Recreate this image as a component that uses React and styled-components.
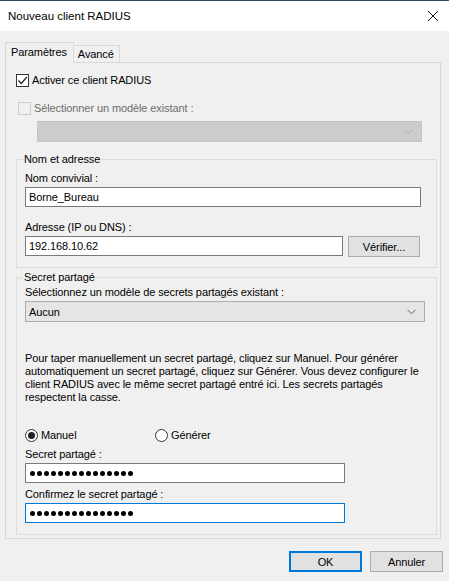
import styled, { createGlobalStyle } from "styled-components";

const GlobalStyle = createGlobalStyle`
  html, body {
    margin: 0;
    padding: 0;
    background: #f0f0f0;
  }
  body {
    font-family: "Liberation Sans", Arial, sans-serif;
    font-size: 11px;
    letter-spacing: -0.1px;
    color: #000;
  }
`;

function CheckMark() {
  return (
    <svg width="11" height="11" viewBox="0 0 11 11">
      <path d="M1.5 5.5 L4.3 8.5 L9.8 2" fill="none" stroke="#222" strokeWidth="1.2" />
    </svg>
  );
}

function Chevron({ color }) {
  return (
    <svg width="9" height="6" viewBox="0 0 9 6">
      <path d="M0.5 0.8 L4.5 4.8 L8.5 0.8" fill="none" stroke={color} strokeWidth="1" />
    </svg>
  );
}

function Masked({ count }) {
  return (
    <DotRow>
      {Array.from({ length: count }, (_, i) => (
        <Dot key={i} />
      ))}
    </DotRow>
  );
}

function App() {
  return (
    <Window>
      <GlobalStyle />
      <TitleBar>
        <Title>Nouveau client RADIUS</Title>
        <Close>
          <svg width="12" height="12" viewBox="0 0 12 12">
            <path d="M1 1 L11 11 M11 1 L1 11" stroke="#111" strokeWidth="1" />
          </svg>
        </Close>
      </TitleBar>

      <Content>
        <TabStrip>
          <Tab $active>Paramètres</Tab>
          <Tab>Avancé</Tab>
        </TabStrip>

        <Panel>
          <CheckRow>
            <CheckBox>
              <CheckMark />
            </CheckBox>
            Activer ce client RADIUS
          </CheckRow>
          <CheckRow $disabled>
            <CheckBox $disabled />
            Sélectionner un modèle existant :
          </CheckRow>
          <Combo $disabled $indent>
            <span />
            <Chevron color="#b0b0b0" />
          </Combo>

          <Group>
            <Legend>Nom et adresse</Legend>
            <Label>Nom convivial :</Label>
            <TextBox>Borne_Bureau</TextBox>
            <Label $gap>Adresse (IP ou DNS) :</Label>
            <InputRow>
              <TextBox $width={318}>192.168.10.62</TextBox>
              <Button $width={72}>Vérifier...</Button>
            </InputRow>
          </Group>

          <Group $second>
            <Legend>Secret partagé</Legend>
            <Label $first>Sélectionnez un modèle de secrets partagés existant :</Label>
            <Combo>
              <span>Aucun</span>
              <Chevron color="#666" />
            </Combo>
            <Help>
              Pour taper manuellement un secret partagé, cliquez sur Manuel. Pour générer
              <br />
              automatiquement un secret partagé, cliquez sur Générer. Vous devez configurer le
              <br />
              client RADIUS avec le même secret partagé entré ici. Les secrets partagés
              <br />
              respectent la casse.
            </Help>
            <RadioRow>
              <RadioItem $width={130}>
                <Radio $checked />
                Manuel
              </RadioItem>
              <RadioItem>
                <Radio />
                Générer
              </RadioItem>
            </RadioRow>
            <Label $tight>Secret partagé :</Label>
            <TextBox $width={320}>
              <Masked count={15} />
            </TextBox>
            <Label>Confirmez le secret partagé :</Label>
            <TextBox $width={320} $focused>
              <Masked count={15} />
            </TextBox>
          </Group>
        </Panel>

        <Footer>
          <Button $width={73} $default>OK</Button>
          <Button $width={73}>Annuler</Button>
        </Footer>
      </Content>
    </Window>
  );
}

const Window = styled.div`
  width: 449px;
  height: 581px;
  display: flex;
  flex-direction: column;
  background: #f0f0f0;
  overflow: hidden;
`;

const TitleBar = styled.div`
  height: 30px;
  border-top: 1px solid #2d4b5a;
  background: #fff;
  display: flex;
  align-items: center;
  justify-content: space-between;
  padding: 0 8px;
`;

const Title = styled.div`
  font-size: 11.5px;
  letter-spacing: 0;
  padding-bottom: 1px;
`;

const Close = styled.div`
  display: flex;
  margin-right: 2px;
`;

const Content = styled.div`
  padding: 11px 8px 0 5px;
  display: flex;
  flex-direction: column;
`;

const TabStrip = styled.div`
  display: flex;
  align-items: flex-end;
  height: 20px;
`;

const Tab = styled.div`
  height: ${(p) => (p.$active ? "21px" : "17px")};
  box-sizing: border-box;
  padding: ${(p) => (p.$active ? "2px 6px 0 5px" : "1px 5px 0 4px")};
  border: 1px solid #d9d9d9;
  border-bottom: none;
  background: #f0f0f0;
  margin-bottom: ${(p) => (p.$active ? "-1px" : "0")};
  margin-left: ${(p) => (p.$active ? "0" : "-1px")};
  position: relative;
  z-index: ${(p) => (p.$active ? 1 : 0)};
  line-height: 15px;
`;

const Panel = styled.div`
  height: 477px;
  box-sizing: border-box;
  border: 1px solid #d9d9d9;
  padding: 10px 4px 0 10px;
  display: flex;
  flex-direction: column;
`;

const CheckRow = styled.div`
  display: flex;
  align-items: center;
  gap: 3px;
  height: 14px;
  margin-bottom: ${(p) => (p.$disabled ? "6px" : "14px")};
  color: ${(p) => (p.$disabled ? "#6d6d6d" : "#000")};
  padding-left: ${(p) => (p.$disabled ? "2px" : "0")};
`;

const CheckBox = styled.span`
  width: 13px;
  height: 13px;
  box-sizing: border-box;
  border: 1px solid ${(p) => (p.$disabled ? "#cccccc" : "#333")};
  background: ${(p) => (p.$disabled ? "#f0f0f0" : "#fff")};
  display: flex;
  align-items: center;
  justify-content: center;
`;

const Combo = styled.div`
  height: 21px;
  box-sizing: border-box;
  width: ${(p) => (p.$indent ? "385px" : "400px")};
  margin-left: ${(p) => (p.$indent ? "21px" : "0")};
  background: ${(p) => (p.$disabled ? "#cccccc" : "#e5e5e5")};
  border: 1px solid ${(p) => (p.$disabled ? "#c4c4c4" : "#adadad")};
  display: flex;
  align-items: center;
  justify-content: space-between;
  padding: 0 8px 0 3px;
`;

const Group = styled.fieldset`
  margin: ${(p) => (p.$second ? "2px 0 0 0" : "10px 0 0 0")};
  padding: 1px 8px ${(p) => (p.$second ? "11px" : "10px")} 8px;
  border: 1px solid #dcdcdc;
  min-width: 0;
  display: flex;
  flex-direction: column;
  align-items: flex-start;
  width: 421px;
  box-sizing: border-box;
`;

const Legend = styled.legend`
  padding: 0 1px;
  margin-left: -2px;
  line-height: 14px;
`;

const Label = styled.div`
  line-height: 15px;
  margin-top: ${(p) => (p.$gap ? "13px" : p.$tight ? "5px" : p.$first ? "0" : "4px")};
  margin-bottom: 1px;
`;

const TextBox = styled.div`
  width: ${(p) => (p.$width ? `${p.$width}px` : "396px")};
  height: 20px;
  box-sizing: border-box;
  background: #fff;
  border: 1px solid ${(p) => (p.$focused ? "#0078d7" : "#7a7a7a")};
  display: flex;
  align-items: center;
  padding: 0 3px;
`;

const InputRow = styled.div`
  display: flex;
  gap: 5px;
`;

const Button = styled.div`
  width: ${(p) => p.$width}px;
  height: 21px;
  box-sizing: border-box;
  background: #e1e1e1;
  border: ${(p) => (p.$default ? "2px solid #0078d7" : "1px solid #adadad")};
  display: flex;
  align-items: center;
  justify-content: center;
`;

const Help = styled.p`
  margin: 30px 0 0 0;
  line-height: 13px;
  white-space: nowrap;
`;

const RadioRow = styled.div`
  display: flex;
  margin-top: 24px;
  height: 14px;
`;

const RadioItem = styled.div`
  display: flex;
  align-items: center;
  gap: 3px;
  width: ${(p) => (p.$width ? `${p.$width}px` : "auto")};
`;

const Radio = styled.span`
  width: 13px;
  height: 13px;
  box-sizing: border-box;
  border-radius: 50%;
  border: 1px solid #333;
  background: #fff;
  display: flex;
  align-items: center;
  justify-content: center;

  &::after {
    content: "";
    width: 7px;
    height: 7px;
    border-radius: 50%;
    background: ${(p) => (p.$checked ? "#222" : "transparent")};
  }
`;

const DotRow = styled.span`
  display: flex;
  gap: 2px;
  padding-left: 1px;
`;

const Dot = styled.span`
  width: 5px;
  height: 5px;
  border-radius: 50%;
  background: #000;
`;

const Footer = styled.div`
  display: flex;
  justify-content: flex-end;
  gap: 8px;
  margin-top: 12px;
  margin-right: -2px;
`;

export default App;
